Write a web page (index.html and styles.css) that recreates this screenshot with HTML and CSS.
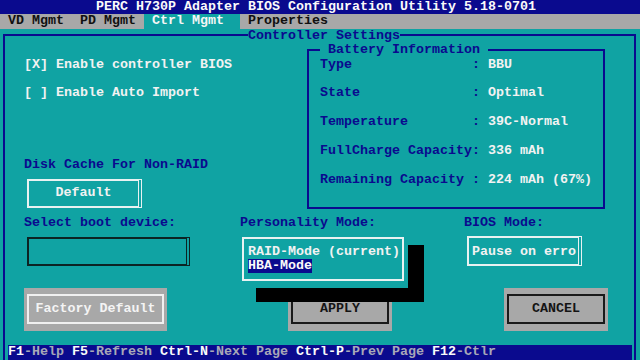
FILE: index.html
```html
<!DOCTYPE html>
<html lang="en">
<head>
  <meta charset="UTF-8">
  <title>PERC H730P Adapter BIOS Configuration Utility</title>
  <link rel="stylesheet" href="styles.css">
</head>
<body>
  <div class="screen">
    <div class="title">PERC H730P Adapter BIOS Configuration Utility 5.18-0701</div>
    <div class="menu"> VD Mgmt  PD Mgmt <span class="tab"> Ctrl Mgmt  </span> Properties</div>

    <div class="frame"></div>
    <div class="legend legend-ctrl">Controller Settings</div>

    <div class="check check-bios">[X] Enable controller BIOS</div>
    <div class="check check-import">[ ] Enable Auto Import</div>

    <div class="battery"></div>
    <div class="legend legend-battery"> Battery Information </div>
    <div class="info info-type"><span class="key">Type               :</span> BBU</div>
    <div class="info info-state"><span class="key">State              :</span> Optimal</div>
    <div class="info info-temp"><span class="key">Temperature        :</span> 39C-Normal</div>
    <div class="info info-full"><span class="key">FullCharge Capacity:</span> 336 mAh</div>
    <div class="info info-remain"><span class="key">Remaining Capacity :</span> 224 mAh (67%)</div>

    <div class="caption caption-cache">Disk Cache For Non-RAID</div>
    <div class="field field-cache">Default</div>

    <div class="caption caption-boot">Select boot device:</div>
    <div class="field field-boot"></div>

    <div class="caption caption-mode">Personality Mode:</div>

    <div class="caption caption-bios">BIOS Mode:</div>
    <div class="field field-bios">Pause on erro</div>

    <div class="btn btn-factory"><span class="face">Factory Default</span></div>
    <div class="btn btn-apply"><span class="face">APPLY</span></div>
    <div class="btn btn-cancel"><span class="face">CANCEL</span></div>

    <div class="popup">
      <div class="popup-item">RAID-Mode (current)</div>
      <div class="popup-item"><span class="selected">HBA-Mode</span></div>
    </div>
    <div class="shadow shadow-right"></div>
    <div class="shadow shadow-bottom"></div>

    <div class="help"><span class="hk">F1</span>-Help <span class="hk">F5</span>-Refresh <span class="hk">Ctrl-N</span>-Next Page <span class="hk">Ctrl-P</span>-Prev Page <span class="hk">F12</span>-Ctlr</div>
  </div>
</body>
</html>
```

FILE: styles.css
```css
body {
  margin: 0;
  background: #10a3a3;
}
.screen {
  width: 640px;
  height: 360px;
  display: grid;
  grid-template-columns: repeat(80, 8px);
  grid-template-rows: repeat(25, 14.4px);
  background: #10a3a3;
  color: #f2f2f2;
  font: bold 13.33px/14.4px "Liberation Mono", "DejaVu Sans Mono", monospace;
  overflow: hidden;
}

/* top bars */
.title {
  grid-column: 1 / -1;
  grid-row: 1;
  background: #0a0a8e;
  color: #fafafa;
  padding-left: 96px;
  white-space: pre;
}
.menu {
  grid-column: 1 / -1;
  grid-row: 2;
  background: #a8a8a8;
  color: #101010;
  white-space: pre;
}
.menu .tab {
  display: inline-block;
  height: 14.4px;
  background: #10a3a3;
  color: #f6f6f6;
}

/* frames */
.frame {
  grid-column: 1 / -1;
  grid-row: 3 / -1;
  margin: 5px 4px 0 3px;
  border: 2px solid #0a0a8e;
  border-bottom: 0;
}
.battery {
  grid-column: 39 / 77;
  grid-row: 4 / 16;
  margin: 6px 3px 7px 3px;
  border: 2px solid #0a0a8e;
}
.legend {
  background: #10a3a3;
  color: #0a0a8e;
  white-space: pre;
}
.legend-ctrl {
  grid-column: 32 / span 19;
  grid-row: 3;
}
.legend-battery {
  grid-column: 41 / span 21;
  grid-row: 4;
}

/* left column */
.check {
  grid-column: 4 / 36;
  white-space: pre;
}
.check-bios { grid-row: 5; }
.check-import { grid-row: 7; }

.caption {
  color: #0a0a8e;
  white-space: pre;
}
.caption-cache { grid-column: 4 / 30; grid-row: 12; }
.caption-boot { grid-column: 4 / 30; grid-row: 16; }
.caption-mode { grid-column: 31 / 52; grid-row: 16; }
.caption-bios { grid-column: 59 / 75; grid-row: 16; }

/* battery info */
.info {
  grid-column: 41 / 77;
  white-space: pre;
}
.info .key { color: #0a0a8e; }
.info-type { grid-row: 5; }
.info-state { grid-row: 7; }
.info-temp { grid-row: 9; }
.info-full { grid-row: 11; }
.info-remain { grid-row: 13; }

/* fields */
.field {
  border: 2px solid #e8f2f2;
  border-right: 4px double #e8f2f2;
  white-space: pre;
}
.field-cache {
  grid-column: 4 / 19;
  grid-row: 13 / 16;
  margin: 6px 2px 8px 3px;
  display: flex;
  align-items: center;
  justify-content: center;
}
.field-boot {
  grid-column: 4 / 25;
  grid-row: 17 / 20;
  margin: 6.6px 2px 7.6px 3px;
  border-color: #0c2424;
}
.field-bios {
  grid-column: 59 / 74;
  grid-row: 17 / 20;
  margin: 6px 2px 7.6px 3px;
  padding: 6.4px 0 0 3px;
}

/* buttons */
.btn {
  grid-row: 21 / 24;
  background: #a8a8a8;
  padding: 6px 3px 7px 3px;
  display: flex;
}
.btn .face {
  flex: 1;
  display: flex;
  align-items: center;
  justify-content: center;
  border: 2px solid #1a1a1a;
  color: #141414;
  white-space: pre;
}
.btn-factory {
  grid-column: 4 / 22;
  margin-right: 1px;
}
.btn-factory .face {
  border-color: #f0f0f0;
  color: #f4f4f4;
}
.btn-apply { grid-column: 37 / 50; }
.btn-cancel { grid-column: 64 / 77; }

/* personality popup */
.popup {
  grid-column: 31 / 52;
  grid-row: 17 / 21;
  margin: 6.5px 4px 7px 2px;
  border: 2px solid #e8f2f2;
  padding: 5.9px 0 0 4px;
  background: #10a3a3;
}
.popup-item {
  white-space: pre;
  height: 14.4px;
}
.popup-item .selected {
  display: inline-block;
  height: 14px;
  background: #0a0a8e;
  color: #fafafa;
}
.shadow {
  background: #000;
  position: relative;
  z-index: 1;
}
.shadow-right {
  grid-column: 52 / 54;
  grid-row: 18 / 21;
}
.shadow-bottom {
  grid-column: 33 / 54;
  grid-row: 21;
}

/* help bar */
.help {
  grid-column: 2 / 80;
  grid-row: 25;
  background: #0a0a8e;
  color: #a8a8b8;
  white-space: pre;
}
.help .hk { color: #fafafa; }
```
